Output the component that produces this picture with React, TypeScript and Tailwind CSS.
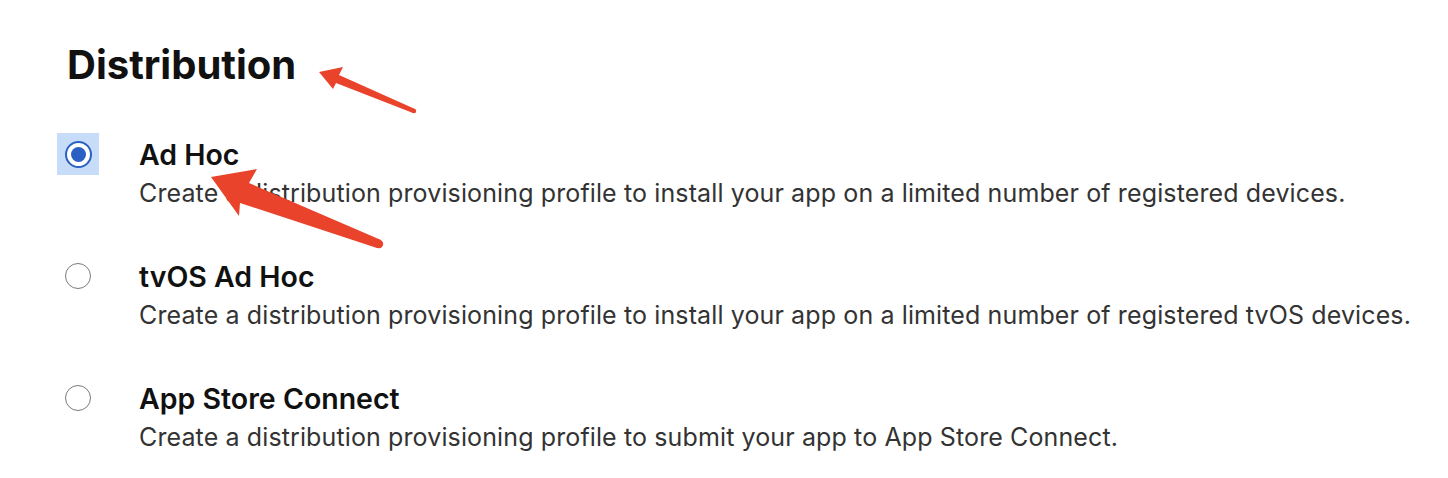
import React from "react";

const options = [
  {
    title: "Ad Hoc",
    desc: "Create a distribution provisioning profile to install your app on a limited number of registered devices.",
    checked: true,
  },
  {
    title: "tvOS Ad Hoc",
    desc: "Create a distribution provisioning profile to install your app on a limited number of registered tvOS devices.",
    checked: false,
  },
  {
    title: "App Store Connect",
    desc: "Create a distribution provisioning profile to submit your app to App Store Connect.",
    checked: false,
  },
];

function Radio({ checked }: { checked: boolean }) {
  if (checked) {
    return (
      <div className="w-[42px] h-[42px] bg-[#c6dcf8] flex items-center justify-center">
        <div className="w-[27px] h-[27px] rounded-full border-[2.5px] border-[#2a5fc4] bg-white flex items-center justify-center">
          <div className="w-[15px] h-[15px] rounded-full bg-[#2a5fc4]" />
        </div>
      </div>
    );
  }
  return (
    <div className="w-[42px] h-[42px] flex items-center justify-center">
      <div className="w-[26px] h-[26px] rounded-full border-[1.5px] border-[#7a7a7a] bg-white" />
    </div>
  );
}

export default function App() {
  return (
    <div
      className="relative w-[1448px] h-[478px] bg-white overflow-hidden"
      style={{ fontFamily: "Inter, 'Noto Sans', sans-serif" }}
    >
      <div className="pl-[67px] pt-[39px]">
        <h1 className="text-[40px] leading-[52px] font-bold text-[#111]">
          Distribution
        </h1>
        <div className="mt-[46px] flex flex-col gap-[48px]">
          {options.map((o) => (
            <div key={o.title} className="flex items-start">
              <div className="ml-[-10px] w-[82px] mt-[-4px]">
                <Radio checked={o.checked} />
              </div>
              <div className="flex flex-col">
                <div className="text-[28.5px] leading-[36px] font-semibold text-[#111]">
                  {o.title}
                </div>
                <div className="mt-[2px] text-[25px] leading-[36px] text-[#333] tracking-[0.12px]">
                  {o.desc}
                </div>
              </div>
            </div>
          ))}
        </div>
      </div>

      {/* annotation arrows */}
      <svg className="absolute inset-0 pointer-events-none" width="1448" height="478">
        <g fill="#e9432b">
          <polygon points="319,72 343,67 339,75 415,109 413,113 336,83 333,89" />
          <circle cx="414" cy="111" r="2.2" />
          <polygon points="211,177 257,169 249,183 381,240 377,248 240,203 239,216" />
          <circle cx="379" cy="244" r="4.2" />
        </g>
      </svg>
    </div>
  );
}
